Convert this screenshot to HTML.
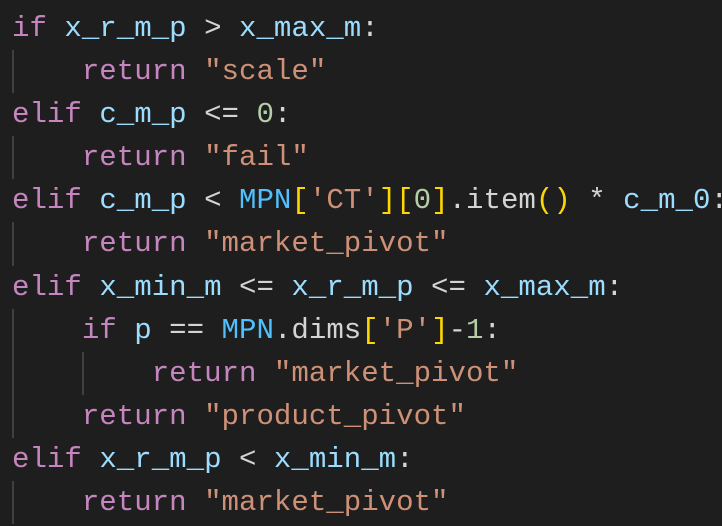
<!DOCTYPE html>
<html><head><meta charset="utf-8"><style>
html,body{margin:0;padding:0;background:#1e1e1e;width:722px;height:526px;overflow:hidden}
.c{position:absolute;left:12px;top:7px;font-family:"Liberation Mono",monospace;font-size:29.1px;line-height:43.1px;color:#d4d4d4}
.l{position:relative;height:43.1px;white-space:pre}
.g{position:absolute;top:0;width:2px;height:43.1px;background:#404040}
.k{color:#c586c0}.v{color:#9cdcfe}.s{color:#ce9178}.n{color:#b5cea8}.b{color:#ffd700}.m{color:#4fc1ff}
</style></head><body><div class="c">
<div class="l"><span class="k">if</span> <span class="v">x_r_m_p</span> &gt; <span class="v">x_max_m</span>:</div>
<div class="l"><div class="g" style="left:0"></div>    <span class="k">return</span> <span class="s">"scale"</span></div>
<div class="l"><span class="k">elif</span> <span class="v">c_m_p</span> &lt;= <span class="n">0</span>:</div>
<div class="l"><div class="g" style="left:0"></div>    <span class="k">return</span> <span class="s">"fail"</span></div>
<div class="l"><span class="k">elif</span> <span class="v">c_m_p</span> &lt; <span class="m">MPN</span><span class="b">[</span><span class="s">'CT'</span><span class="b">][</span><span class="n">0</span><span class="b">]</span>.item<span class="b">()</span> * <span class="v">c_m_0</span>:</div>
<div class="l"><div class="g" style="left:0"></div>    <span class="k">return</span> <span class="s">"market_pivot"</span></div>
<div class="l"><span class="k">elif</span> <span class="v">x_min_m</span> &lt;= <span class="v">x_r_m_p</span> &lt;= <span class="v">x_max_m</span>:</div>
<div class="l"><div class="g" style="left:0"></div>    <span class="k">if</span> <span class="v">p</span> == <span class="m">MPN</span>.dims<span class="b">[</span><span class="s">'P'</span><span class="b">]</span>-<span class="n">1</span>:</div>
<div class="l"><div class="g" style="left:0"></div><div class="g" style="left:70px"></div>        <span class="k">return</span> <span class="s">"market_pivot"</span></div>
<div class="l"><div class="g" style="left:0"></div>    <span class="k">return</span> <span class="s">"product_pivot"</span></div>
<div class="l"><span class="k">elif</span> <span class="v">x_r_m_p</span> &lt; <span class="v">x_min_m</span>:</div>
<div class="l"><div class="g" style="left:0"></div>    <span class="k">return</span> <span class="s">"market_pivot"</span></div>
</div></body></html>
